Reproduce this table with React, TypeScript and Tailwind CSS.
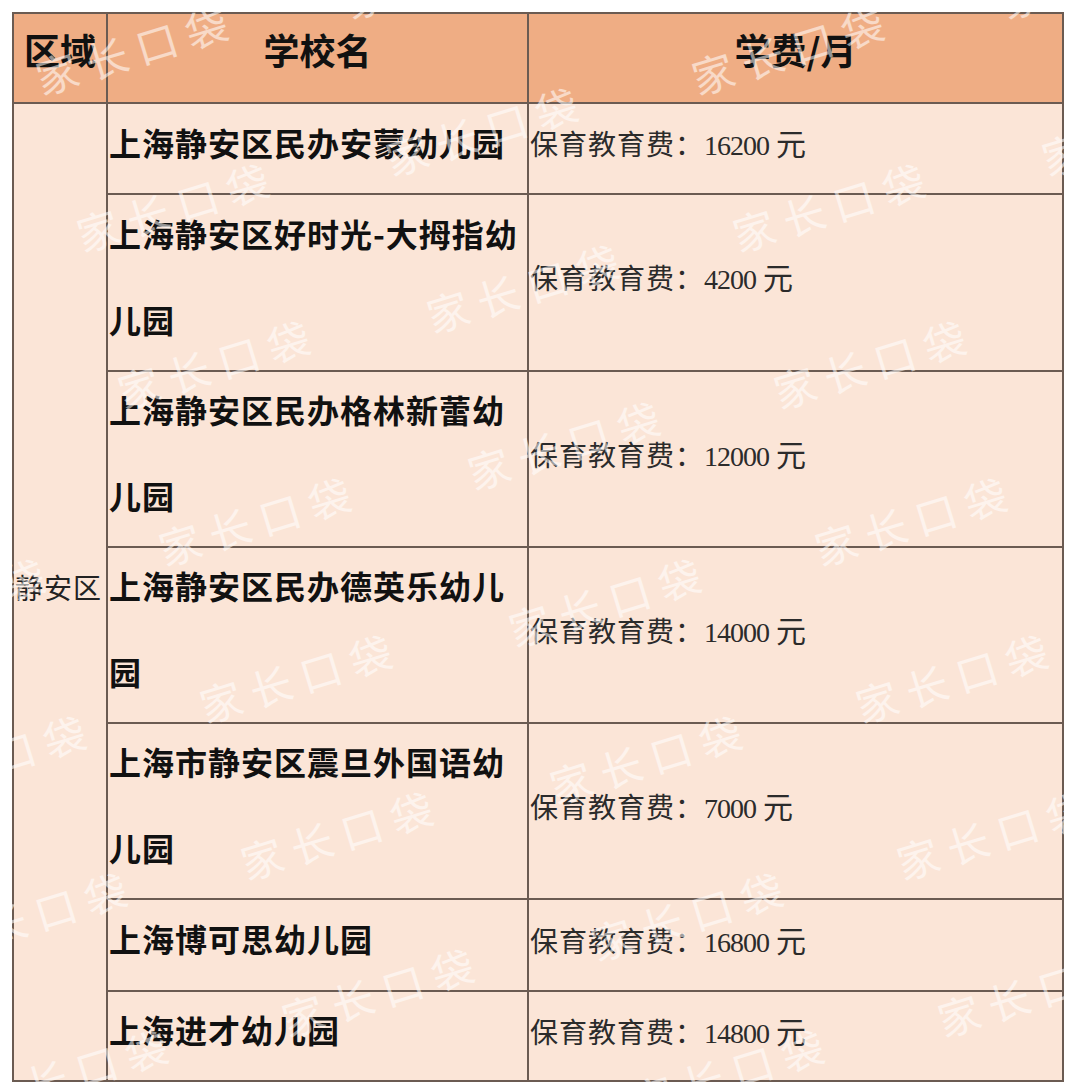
import React from "react";

type Row = { name: string; fee: string; h: string };

const rows: Row[] = [
  { name: "上海静安区民办安蒙幼儿园", fee: "16200", h: "h-[91px]" },
  { name: "上海静安区好时光-大拇指幼儿园", fee: "4200", h: "h-[177px]" },
  { name: "上海静安区民办格林新蕾幼儿园", fee: "12000", h: "h-[176px]" },
  { name: "上海静安区民办德英乐幼儿园", fee: "14000", h: "h-[176px]" },
  { name: "上海市静安区震旦外国语幼儿园", fee: "7000", h: "h-[176px]" },
  { name: "上海博可思幼儿园", fee: "16800", h: "h-[92px]" },
  { name: "上海进才幼儿园", fee: "14800", h: "h-[90px]" },
];

function buildMarks() {
  const marks: { x: number; y: number }[] = [];
  for (let k = -2; k <= 7; k++) {
    for (let m = -1; m <= 1; m++) {
      marks.push({ x: 177 + 41 * k + 656 * m, y: 205 + 157 * k });
      marks.push({ x: 486 + 41 * k + 656 * m, y: 129 + 157 * k });
    }
  }
  return marks.filter((p) => p.x > -150 && p.x < 1230 && p.y > -100 && p.y < 1200);
}

const marks = buildMarks();

export default function App() {
  return (
    <div className="relative w-[1080px] h-[1092px] overflow-hidden bg-white font-['Noto_Sans_CJK_SC',sans-serif]">
      <table className="ml-[12px] mt-[12px] w-[1050px] table-fixed border-collapse">
        <colgroup>
          <col className="w-[94px]" />
          <col className="w-[421px]" />
          <col className="w-[535px]" />
        </colgroup>
        <thead>
          <tr className="h-[90px] bg-[#efad84]">
            <th className="border-2 border-[#6b5b52] pb-[18px] text-center align-middle text-[36px] font-bold leading-none text-[#111]">
              区域
            </th>
            <th className="border-2 border-[#6b5b52] pb-[18px] text-center align-middle text-[36px] font-bold leading-none text-[#111]">
              学校名
            </th>
            <th className="border-2 border-[#6b5b52] pb-[18px] text-center align-middle text-[36px] font-bold leading-none text-[#111]">
              学费/月
            </th>
          </tr>
        </thead>
        <tbody className="bg-[#fbe5d7]">
          {rows.map((r, i) => (
            <tr key={i} className={r.h}>
              {i === 0 && (
                <td
                  rowSpan={rows.length}
                  className="border-2 border-[#6b5b52] pl-[1px] pb-[10px] text-left align-middle text-[28px] leading-none tracking-[1px] text-[#222]"
                >
                  静安区
                </td>
              )}
              <td className="border-2 border-[#6b5b52] pl-[1px] pr-[2px] text-left align-middle text-[32px] font-bold leading-[86px] tracking-[1px] text-[#111]">
                <div className="-mt-[14px]">{r.name}</div>
              </td>
              <td className="border-2 border-[#6b5b52] pl-[1px] pb-[10px] text-left align-middle leading-none whitespace-nowrap text-[#2b2b2b]">
                <span className="text-[28px] tracking-[1px]">保育教育费：</span>
                <span className="font-['Liberation_Serif',serif] text-[28px] tracking-[-1px]">{r.fee}</span>
                <span className="font-['Liberation_Serif',serif] text-[28px]"> </span>
                <span className="text-[30px]">元</span>
              </td>
            </tr>
          ))}
        </tbody>
      </table>

      <div className="pointer-events-none absolute inset-0 overflow-hidden">
        {marks.map((p, i) => (
          <span
            key={i}
            className="absolute -translate-x-1/2 -translate-y-1/2 rotate-[-17deg] whitespace-nowrap text-[42px] leading-none tracking-[10px] text-white/55"
            style={{ left: p.x, top: p.y }}
          >
            家长口袋
          </span>
        ))}
      </div>
    </div>
  );
}
